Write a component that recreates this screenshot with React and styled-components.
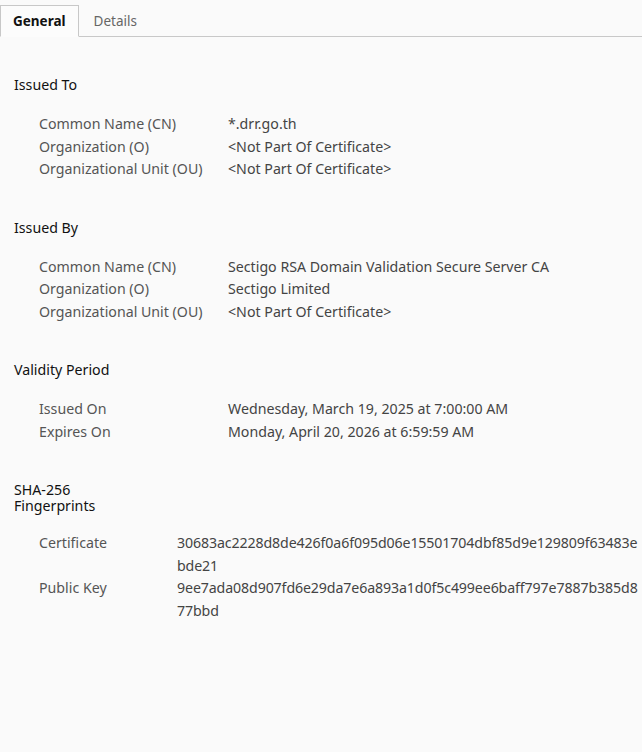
import React from 'react';
import styled, { createGlobalStyle } from 'styled-components';

const Global = createGlobalStyle`
  html, body {
    margin: 0;
    padding: 0;
    background: #fafafa;
  }
  body {
    font-family: "Noto Sans", "Open Sans", sans-serif;
    font-size: 14.2px;
    color: #222;
  }
`;

const Page = styled.div`
  width: 642px;
  height: 752px;
  background: #fafafa;
  overflow: hidden;
`;

const TabBar = styled.div`
  display: flex;
  align-items: flex-end;
  height: 37px;
  padding-top: 5px;
  box-sizing: border-box;
  border-bottom: 1px solid #c8c8c8;
`;

const Tab = styled.div`
  height: 32px;
  box-sizing: border-box;
  padding: 0 ${p => (p.$active ? 12 : 14)}px 1px;
  display: flex;
  align-items: center;
  margin-bottom: -1px;
  font-size: 13.5px;
  font-weight: ${p => (p.$active ? 700 : 400)};
  color: ${p => (p.$active ? '#111' : '#666')};
  background: ${p => (p.$active ? '#fcfcfc' : 'transparent')};
  border: 1px solid ${p => (p.$active ? '#c8c8c8' : 'transparent')};
  border-bottom-color: ${p => (p.$active ? '#fcfcfc' : 'transparent')};
`;

const Content = styled.div`
  padding: 38px 0 0 14px;
`;

const Section = styled.section`
  margin-bottom: 37px;
`;

const Heading = styled.h3`
  margin: 0 0 ${p => (p.$tight ? 18 : 18)}px;
  padding-top: ${p => (p.$tight ? '2px' : '0')};
  font-size: 14.2px;
  font-weight: 400;
  color: #111;
  line-height: ${p => (p.$tight ? '16px' : '20px')};
`;

const Rows = styled.div`
  display: grid;
  grid-template-columns: ${p => p.$labelWidth}px 1fr;
  padding-left: 25px;
`;

const Label = styled.div`
  color: #555;
  line-height: 22.5px;
  white-space: nowrap;
`;

const Value = styled.div`
  color: #444;
  line-height: 22.5px;
  white-space: nowrap;
  letter-spacing: ${p => (p.$hex ? '-0.12px' : 'normal')};
`;

const sections = [
  {
    title: 'Issued To',
    rows: [
      ['Common Name (CN)', '*.drr.go.th'],
      ['Organization (O)', '<Not Part Of Certificate>'],
      ['Organizational Unit (OU)', '<Not Part Of Certificate>'],
    ],
  },
  {
    title: 'Issued By',
    rows: [
      ['Common Name (CN)', 'Sectigo RSA Domain Validation Secure Server CA'],
      ['Organization (O)', 'Sectigo Limited'],
      ['Organizational Unit (OU)', '<Not Part Of Certificate>'],
    ],
  },
  {
    title: 'Validity Period',
    rows: [
      ['Issued On', 'Wednesday, March 19, 2025 at 7:00:00 AM'],
      ['Expires On', 'Monday, April 20, 2026 at 6:59:59 AM'],
    ],
  },
];

const fingerprints = [
  ['Certificate', ['30683ac2228d8de426f0a6f095d06e15501704dbf85d9e129809f63483e', 'bde21']],
  ['Public Key', ['9ee7ada08d907fd6e29da7e6a893a1d0f5c499ee6baff797e7887b385d8', '77bbd']],
];

export default function App() {
  return (
    <Page>
      <Global />
      <TabBar>
        <Tab $active>General</Tab>
        <Tab>Details</Tab>
      </TabBar>
      <Content>
        {sections.map(s => (
          <Section key={s.title}>
            <Heading>{s.title}</Heading>
            <Rows $labelWidth={189}>
              {s.rows.map(([l, v]) => (
                <React.Fragment key={l}>
                  <Label>{l}</Label>
                  <Value>{v}</Value>
                </React.Fragment>
              ))}
            </Rows>
          </Section>
        ))}
        <Section>
          <Heading $tight>
            SHA-256
            <br />
            Fingerprints
          </Heading>
          <Rows $labelWidth={138}>
            {fingerprints.map(([l, lines]) => (
              <React.Fragment key={l}>
                <Label>{l}</Label>
                <Value $hex>
                  {lines.map(t => (
                    <div key={t}>{t}</div>
                  ))}
                </Value>
              </React.Fragment>
            ))}
          </Rows>
        </Section>
      </Content>
    </Page>
  );
}
